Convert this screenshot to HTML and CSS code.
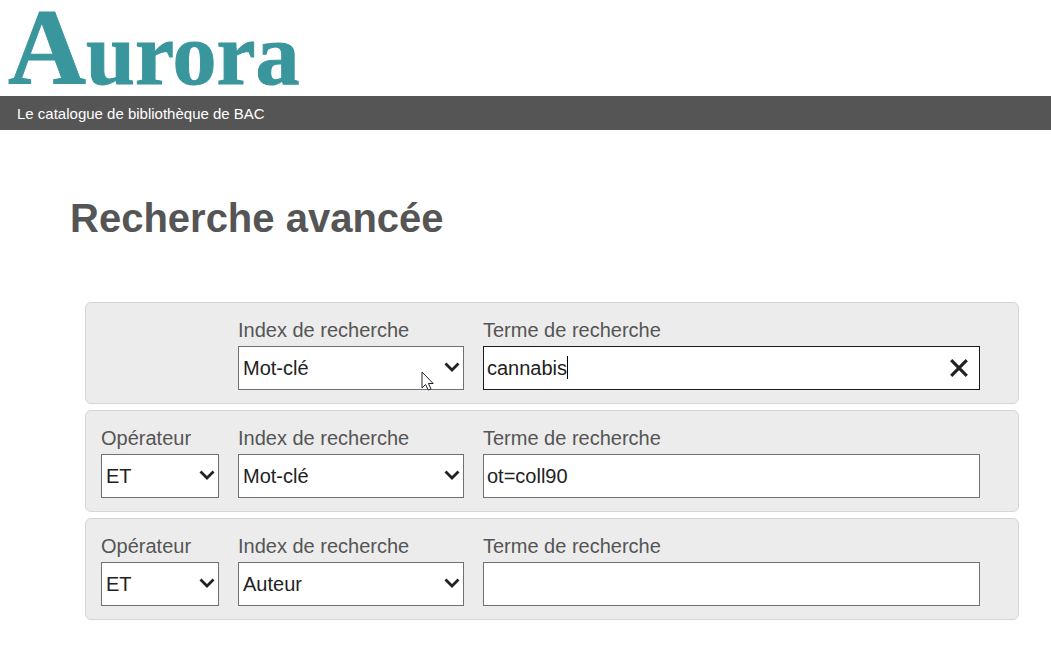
FILE: index.html
```html
<!DOCTYPE html>
<html lang="fr">
<head>
    <meta charset="UTF-8">
    <meta name="viewport" content="width=device-width, initial-scale=1.0">
    <title>Aurora - Recherche avancée</title>
    <link rel="stylesheet" href="styles.css">
</head>
<body>
    <header>
        <div class="logo">Aurora</div>
        <div class="banner">Le catalogue de bibliothèque de BAC</div>
    </header>

    <main>
        <h1>Recherche avancée</h1>

        <form class="search-form">
            <div class="search-row">
                <div class="field index">
                    <label for="index1">Index de recherche</label>
                    <div class="control">
                        <select id="index1">
                            <option>Mot-clé</option>
                            <option>Auteur</option>
                            <option>Titre</option>
                        </select>
                        <svg class="chevron" viewBox="0 0 16 11"><path d="M1.5 1.5 L8 8 L14.5 1.5"/></svg>
                        <svg class="pointer" viewBox="0 0 13 20"><path d="M1 1 V17 L4.5 13.5 L7.3 19 L10 18 L7.4 12.5 H12.2 Z"/></svg>
                    </div>
                </div>
                <div class="field term">
                    <label for="term1">Terme de recherche</label>
                    <div class="control">
                        <input class="active" type="text" id="term1" value="cannabis">
                        <span class="caret"></span>
                        <button class="clear" type="button" aria-label="Effacer">
                            <svg viewBox="0 0 18 18"><path d="M2 2 L16 16 M16 2 L2 16"/></svg>
                        </button>
                    </div>
                </div>
            </div>

            <div class="search-row">
                <div class="field operator">
                    <label for="op2">Opérateur</label>
                    <div class="control">
                        <select id="op2">
                            <option>ET</option>
                            <option>OU</option>
                            <option>SAUF</option>
                        </select>
                        <svg class="chevron" viewBox="0 0 16 11"><path d="M1.5 1.5 L8 8 L14.5 1.5"/></svg>
                    </div>
                </div>
                <div class="field index">
                    <label for="index2">Index de recherche</label>
                    <div class="control">
                        <select id="index2">
                            <option>Mot-clé</option>
                            <option>Auteur</option>
                            <option>Titre</option>
                        </select>
                        <svg class="chevron" viewBox="0 0 16 11"><path d="M1.5 1.5 L8 8 L14.5 1.5"/></svg>
                    </div>
                </div>
                <div class="field term">
                    <label for="term2">Terme de recherche</label>
                    <div class="control">
                        <input type="text" id="term2" value="ot=coll90">
                    </div>
                </div>
            </div>

            <div class="search-row">
                <div class="field operator">
                    <label for="op3">Opérateur</label>
                    <div class="control">
                        <select id="op3">
                            <option>ET</option>
                            <option>OU</option>
                            <option>SAUF</option>
                        </select>
                        <svg class="chevron" viewBox="0 0 16 11"><path d="M1.5 1.5 L8 8 L14.5 1.5"/></svg>
                    </div>
                </div>
                <div class="field index">
                    <label for="index3">Index de recherche</label>
                    <div class="control">
                        <select id="index3">
                            <option>Mot-clé</option>
                            <option selected>Auteur</option>
                            <option>Titre</option>
                        </select>
                        <svg class="chevron" viewBox="0 0 16 11"><path d="M1.5 1.5 L8 8 L14.5 1.5"/></svg>
                    </div>
                </div>
                <div class="field term">
                    <label for="term3">Terme de recherche</label>
                    <div class="control">
                        <input type="text" id="term3">
                    </div>
                </div>
            </div>
        </form>
    </main>
</body>
</html>
```
FILE: styles.css
```css
* {
    box-sizing: border-box;
}

body {
    margin: 0;
    background: #fff;
    color: #555;
    font-family: "Liberation Sans", Arial, sans-serif;
    font-size: 20px;
}

.logo {
    height: 96px;
    padding: 2px 8px 0;
    color: #3a969d;
    font-family: "Liberation Serif", "Times New Roman", serif;
    font-size: 88px;
    font-weight: bold;
    line-height: 92px;
    -webkit-text-stroke: 1px #3a969d;
}

.logo::first-letter {
    font-size: 108px;
    line-height: 92px;
}

.banner {
    padding: 2px 17px 0;
    background: #555;
    color: #fff;
    font-size: 15px;
    line-height: 32px;
}

main {
    padding: 65px 32px 40px 70px;
}

h1 {
    margin: 0 0 61px;
    font-size: 40px;
    line-height: 46px;
}

.search-form {
    display: flex;
    flex-direction: column;
    gap: 6px;
    margin-left: 15px;
}

.search-row {
    display: grid;
    grid-template-columns: 118px 226px 1fr;
    column-gap: 19px;
    padding: 15px 38px 13px 15px;
    background: #ececec;
    border: 1px solid #d6d6d6;
    border-radius: 6px;
}

.operator {
    grid-column: 1;
}

.index {
    grid-column: 2;
}

.term {
    grid-column: 3;
}

label {
    display: block;
    margin-bottom: 4px;
    line-height: 24px;
}

.control {
    position: relative;
}

select,
input {
    display: block;
    width: 100%;
    height: 44px;
    margin: 0;
    background: #fff;
    border: 1px solid #707070;
    border-radius: 0;
    color: #222;
    font: inherit;
    outline: none;
    appearance: none;
}

select {
    padding: 0 28px 0 4px;
}

input {
    padding: 0 3px;
}

input.active {
    padding-right: 40px;
    border-color: #1c1c1c;
}

.chevron {
    position: absolute;
    top: 16px;
    right: 4px;
    width: 16px;
    height: 11px;
    fill: none;
    stroke: #222;
    stroke-width: 2.8;
    pointer-events: none;
}

.caret {
    position: absolute;
    top: 10px;
    left: 84px;
    width: 1px;
    height: 23px;
    background: #000;
}

.clear {
    position: absolute;
    top: 12px;
    right: 11px;
    padding: 0;
    border: none;
    background: none;
    cursor: pointer;
}

.clear svg {
    display: block;
    width: 20px;
    height: 20px;
    fill: none;
    stroke: #222;
    stroke-width: 2.8;
}

/* souris */
.pointer {
    position: absolute;
    top: 25px;
    right: 30px;
    width: 13px;
    height: 20px;
    fill: #fff;
    stroke: #223;
    stroke-width: 1;
    pointer-events: none;
}
```
